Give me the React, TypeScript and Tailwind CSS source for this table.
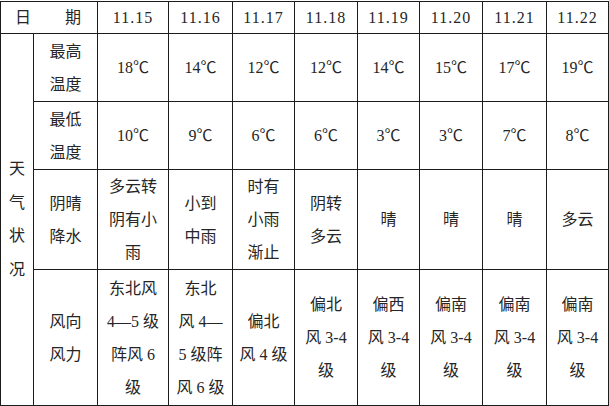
import React from "react";

interface Day {
  date: string;
  high: string;
  low: string;
  sky: string[];
  wind: string[];
}

const days: Day[] = [
  { date: "11.15", high: "18℃", low: "10℃", sky: ["多云转", "阴有小", "雨"], wind: ["东北风", "4—5 级", "阵风 6", "级"] },
  { date: "11.16", high: "14℃", low: "9℃", sky: ["小到", "中雨"], wind: ["东北", "风 4—", "5 级阵", "风 6 级"] },
  { date: "11.17", high: "12℃", low: "6℃", sky: ["时有", "小雨", "渐止"], wind: ["偏北", "风 4 级"] },
  { date: "11.18", high: "12℃", low: "6℃", sky: ["阴转", "多云"], wind: ["偏北", "风 3-4", "级"] },
  { date: "11.19", high: "14℃", low: "3℃", sky: ["晴"], wind: ["偏西", "风 3-4", "级"] },
  { date: "11.20", high: "15℃", low: "3℃", sky: ["晴"], wind: ["偏南", "风 3-4", "级"] },
  { date: "11.21", high: "17℃", low: "7℃", sky: ["晴"], wind: ["偏南", "风 3-4", "级"] },
  { date: "11.22", high: "19℃", low: "8℃", sky: ["多云"], wind: ["偏南", "风 3-4", "级"] },
];

// a plain white cell, text centred both ways
const Cell: React.FC<{ lines: string[]; className?: string }> = ({ lines, className = "" }) => (
  <div className={`bg-white flex flex-col items-center justify-center text-center ${className}`}>
    {lines.map((l, i) => (
      <span key={i} className="whitespace-nowrap">
        {l}
      </span>
    ))}
  </div>
);

export default function App() {
  return (
    <div className="w-[609px] h-[406px] bg-white pt-[1px]">
      <div
        className="grid gap-[1px] bg-[#1c1c1c] p-[1px] w-[609px] h-[405px] text-[16px] leading-[33px] text-[#262626] grid-cols-[32px_63px_70px_63px_61px_62px_61px_62px_63px_61px] grid-rows-[31px_67px_67px_99px_135px]"
        style={{ fontFamily: "'Liberation Serif', 'Noto Sans CJK SC', serif" }}
      >
        {/* header row */}
        <div className="col-span-2 bg-white flex items-center justify-between pl-[14px] pr-[16px]">
          <span>日</span>
          <span>期</span>
        </div>
        {days.map((d) => (
          <Cell key={d.date} lines={[d.date]} className="tracking-[1px]" />
        ))}

        {/* 天气状况 spans the four data rows */}
        <div className="row-span-4 bg-white flex flex-col items-center justify-center pb-[1px]">
          {["天", "气", "状", "况"].map((c) => (
            <span key={c} className="leading-[33.5px]">{c}</span>
          ))}
        </div>

        <Cell lines={["最高", "温度"]} />
        {days.map((d) => (
          <Cell key={d.date + "h"} lines={[d.high]} />
        ))}

        <Cell lines={["最低", "温度"]} />
        {days.map((d) => (
          <Cell key={d.date + "l"} lines={[d.low]} />
        ))}

        <Cell lines={["阴晴", "降水"]} />
        {days.map((d) => (
          <Cell key={d.date + "s"} lines={d.sky} />
        ))}

        <Cell lines={["风向", "风力"]} />
        {days.map((d) => (
          <Cell key={d.date + "w"} lines={d.wind} />
        ))}
      </div>
    </div>
  );
}
